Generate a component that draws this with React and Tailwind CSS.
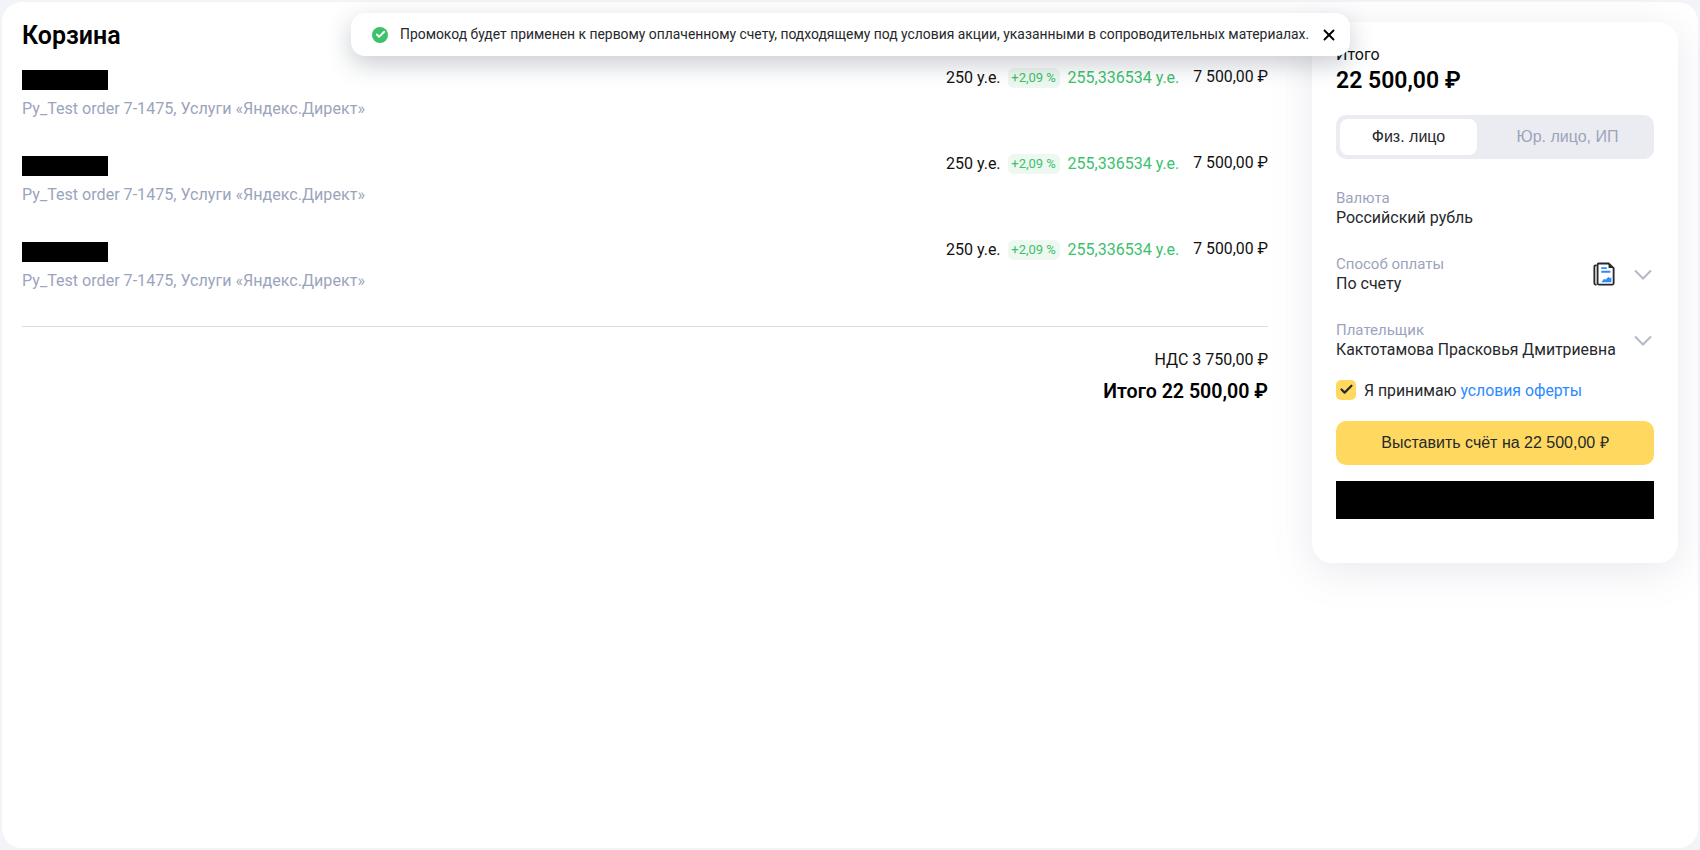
import React from 'react';
import { X, Check } from 'lucide-react';

const rows = [1, 2, 3];

function InvoiceIcon() {
  return (
    <svg width="22" height="24" viewBox="0 0 24 26" fill="none">
      <path d="M4 3.5H2.8A1.3 1.3 0 0 0 1.5 4.8v18.4a1.3 1.3 0 0 0 1.3 1.3H4" stroke="#26282c" strokeWidth="2" />
      <path d="M5 2.8c0-.7.5-1.3 1.2-1.3h10.8l5.5 5v16.7c0 .7-.6 1.3-1.3 1.3H6.3c-.7 0-1.3-.6-1.3-1.3V2.8z" stroke="#26282c" strokeWidth="2" fill="#fff" />
      <path d="M17 1.5v5h5.5z" fill="#26282c" />
      <path d="M9 6.5h6M9 10.5h10" stroke="#2b8bff" strokeWidth="2" />
      <path d="M9 22l3-3.5 2 .5 3-3 1 1.5 2-1v5.5H9z" fill="#2b8bff" />
    </svg>
  );
}

function Chevron() {
  return (
    <svg width="18" height="11" viewBox="0 0 18 11" fill="none" className="mr-[2px]">
      <path d="M1 1.5l8 8 8-8" stroke="#b3b9ca" strokeWidth="2" />
    </svg>
  );
}

function CartRow() {
  return (
    <div className="h-[86px] flex justify-between">
      <div>
        <div className="w-[86px] h-[20px] bg-black" />
        <div className="mt-[9px] text-[16.1px] leading-[20px] text-[#9ba4bc]">Py_Test order 7-1475, Услуги «Яндекс.Директ»</div>
      </div>
      <div className="flex items-start -mt-[2px] text-[16px] leading-[20px]">
        <span className="text-[#111]">250 у.е.</span>
        <span className="ml-[7px] h-[20px] w-[52px] rounded-[6px] bg-[#edf8f0] text-[#3cc16c] text-[13px] text-center whitespace-nowrap">+2,09 %</span>
        <span className="ml-[8px] text-[#3cc16c]">255,336534 у.е.</span>
        <span className="ml-[14px] text-[#111] -mt-[1px] text-[15.8px]">7 500,00 ₽</span>
      </div>
    </div>
  );
}

function Field({ label, value, children }) {
  return (
    <div className="flex items-center justify-between h-[40px]">
      <div className="text-[16px] leading-[19px]">
        <div className="text-[15px] text-[#9ba4bc]">{label}</div>
        <div className="text-[#26282c]">{value}</div>
      </div>
      {children}
    </div>
  );
}

export default function App() {
  return (
    <div className="relative h-[850px] bg-[#f3f4f7] p-[2px] font-['Roboto','Noto_Sans',sans-serif]">
      <div className="h-full rounded-[20px] bg-white flex">
        {/* cart */}
        <div className="w-[1266px] pl-[20px] shrink-0">
          <h1 className="mt-[20px] text-[25px] leading-[28px] font-semibold text-black">Корзина</h1>
          <div className="mt-[20px] h-[258px]">
            {rows.map((r) => <CartRow key={r} />)}
          </div>
          <div className="border-t border-[#d9dde6] mt-[-2px]" />
          <div className="mt-[23px] text-right text-[16px] leading-[20px] text-[#111]">НДС 3 750,00 ₽</div>
          <div className="mt-[10px] text-right text-[19.6px] leading-[24px] font-semibold text-black">Итого 22 500,00 ₽</div>
        </div>

        {/* summary */}
        <div className="ml-[44px] mt-[20px] w-[366px] h-[541px] rounded-[20px] bg-white shadow-[0_8px_40px_rgba(100,110,140,0.15)] px-[24px] pt-[23px]">
          <div className="text-[16px] leading-[19px] text-[#111]">Итого</div>
          <div className="mt-[2px] text-[23px] leading-[30px] font-semibold text-black">22 500,00 ₽</div>
          <div className="mt-[19px] h-[44px] rounded-[10px] bg-[#ebecf1] p-[4px] flex text-[16px] font-['Liberation_Sans',sans-serif]">
            <div className="w-[137px] rounded-[8px] bg-white flex items-center justify-center text-[#26282c]">Физ. лицо</div>
            <div className="flex-1 flex items-center justify-center pl-[8px] text-[#9ba4bc]">Юр. лицо, ИП</div>
          </div>
          <div className="mt-[29px]"><Field label="Валюта" value="Российский рубль" /></div>
          <div className="mt-[26px]">
            <Field label="Способ оплаты" value="По счету">
              <div className="flex items-center gap-[19px]">
                <InvoiceIcon />
                <Chevron />
              </div>
            </Field>
          </div>
          <div className="mt-[26px]">
            <Field label="Плательщик" value={<span className="text-[15.8px]">Кактотамова Прасковья Дмитриевна</span>}>
              <Chevron />
            </Field>
          </div>
          <div className="mt-[18px] flex items-center text-[15.8px]">
            <div className="w-[20px] h-[20px] rounded-[5px] bg-[#ffd95f] flex items-center justify-center">
              <Check size={15} strokeWidth={3.5} className="text-[#26282c]" />
            </div>
            <span className="ml-[8px] text-[#26282c] translate-y-[1px]">Я принимаю <span className="text-[#2b8bff]">условия оферты</span></span>
          </div>
          <div className="mt-[19px] h-[44px] rounded-[10px] bg-[#ffd95f] flex items-center justify-center text-[16px] text-[#26282c] font-['Liberation_Sans',sans-serif]">
            Выставить счёт на 22 500,00 ₽
          </div>
          <div className="mt-[16px] h-[38px] bg-black" />
        </div>
      </div>

      {/* toast */}
      <div className="absolute left-[351px] top-[13px] w-[999px] h-[43px] rounded-[14px] bg-white shadow-[0_8px_24px_rgba(40,50,70,0.25)] flex items-center pl-[21px] text-[13.9px] text-[#26282c]">
        <span className="w-[16px] h-[16px] rounded-full bg-[#3cc16c] flex items-center justify-center">
          <Check size={11} strokeWidth={4} className="text-white" />
        </span>
        <span className="ml-[12px] whitespace-nowrap">Промокод будет применен к первому оплаченному счету, подходящему под условия акции, указанными в сопроводительных материалах.</span>
        <X size={18} strokeWidth={2.5} className="absolute right-[12px] text-black" />
      </div>
    </div>
  );
}
